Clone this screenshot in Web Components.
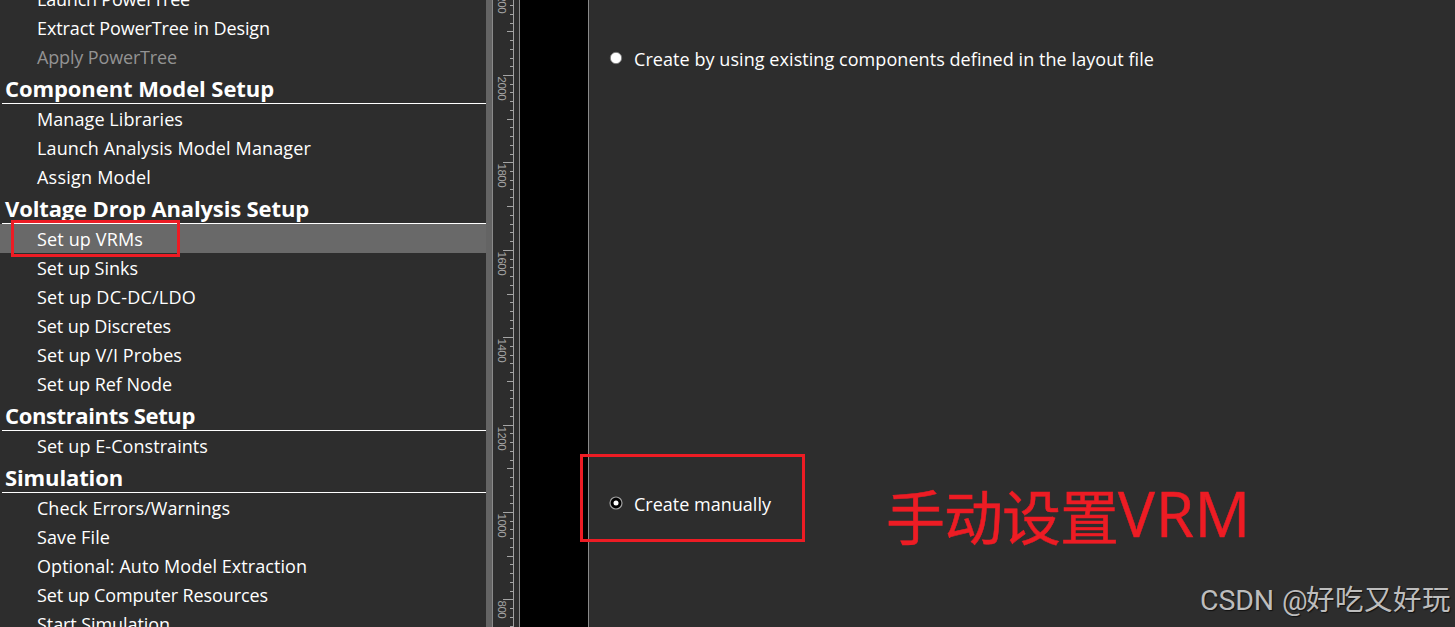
<!DOCTYPE html>
<html lang="en">
<head>
<meta charset="utf-8">
<title>Voltage Drop Analysis Setup</title>
<style>
  html, body {
    margin: 0;
    height: 100%;
    overflow: hidden;
    background: #2d2d2d;
  }
</style>
</head>
<body>
<power-app></power-app>

<script>
// Text that is spaced out to fill the given width
class FitText extends HTMLElement {
  constructor() {
    super();
    this.attachShadow({ mode: "open" });
    this.shadowRoot.innerHTML = `
      <style>
        :host { display: inline-block; white-space: nowrap; }
      </style>
      <span><slot></slot></span>
    `;
  }

  connectedCallback() {
    const target = Number(this.getAttribute("width"));
    const span = this.shadowRoot.querySelector("span");
    const natural = span.getBoundingClientRect().width;
    if (!target || !natural) return;
    const spacing = (target - natural) / this.textContent.length;
    span.style.letterSpacing = `${spacing}px`;
  }
}
customElements.define("fit-text", FitText);

// Red outline used to point at a part of the window
class MarkBox extends HTMLElement {
  constructor() {
    super();
    this.attachShadow({ mode: "open" });
    this.shadowRoot.innerHTML = `
      <style>
        :host {
          display: block;
          position: absolute;
          box-sizing: border-box;
          border: 3px solid #ed1c24;
          pointer-events: none;
        }
      </style>
    `;
  }
}
customElements.define("mark-box", MarkBox);

class FlowItem extends HTMLElement {
  constructor() {
    super();
    this.attachShadow({ mode: "open" });
    this.shadowRoot.innerHTML = `
      <style>
        :host {
          display: block;
          height: 29px;
          padding-left: 37px;
          box-sizing: border-box;
          font: 18px/30px "Open Sans", "Noto Sans", sans-serif;
          color: #fff;
          cursor: pointer;
        }
        :host([disabled]) { color: #939393; }
        :host([selected]) { background: #696969; }
      </style>
      <fit-text width="${this.getAttribute("width")}">${this.getAttribute("label")}</fit-text>
    `;
  }
}

class FlowSection extends HTMLElement {
  constructor() {
    super();
    this.attachShadow({ mode: "open" });
    this.shadowRoot.innerHTML = `
      <style>
        :host { display: block; }
        header {
          height: 32px;
          margin-left: 2px;
          padding-left: 3px;
          border-bottom: 1px solid #fff;
          font: bold 22px/34px "Open Sans", "Noto Sans", sans-serif;
          color: #fff;
        }
      </style>
      <header><fit-text width="${this.getAttribute("width")}">${this.getAttribute("label")}</fit-text></header>
      <slot></slot>
    `;
  }
}

class WorkflowPanel extends HTMLElement {
  constructor() {
    super();
    this.attachShadow({ mode: "open" });
    this.shadowRoot.innerHTML = `
      <style>
        :host {
          display: block;
          width: 486px;
          flex: none;
          overflow: hidden;
        }
        nav { margin-top: -16px; }
      </style>
      <nav>
        <flow-item label="Launch PowerTree" width="153"></flow-item>
        <flow-item label="Extract PowerTree in Design" width="233"></flow-item>
        <flow-item label="Apply PowerTree" width="140" disabled></flow-item>
        <flow-section label="Component Model Setup" width="269">
          <flow-item label="Manage Libraries" width="146"></flow-item>
          <flow-item label="Launch Analysis Model Manager" width="274"></flow-item>
          <flow-item label="Assign Model" width="114"></flow-item>
        </flow-section>
        <flow-section label="Voltage Drop Analysis Setup" width="304">
          <flow-item label="Set up VRMs" width="106" selected></flow-item>
          <flow-item label="Set up Sinks" width="101"></flow-item>
          <flow-item label="Set up DC-DC/LDO" width="159"></flow-item>
          <flow-item label="Set up Discretes" width="134"></flow-item>
          <flow-item label="Set up V/I Probes" width="145"></flow-item>
          <flow-item label="Set up Ref Node" width="135"></flow-item>
        </flow-section>
        <flow-section label="Constraints Setup" width="190">
          <flow-item label="Set up E-Constraints" width="171"></flow-item>
        </flow-section>
        <flow-section label="Simulation" width="118">
          <flow-item label="Check Errors/Warnings" width="193"></flow-item>
          <flow-item label="Save File" width="73"></flow-item>
          <flow-item label="Optional: Auto Model Extraction" width="270"></flow-item>
          <flow-item label="Set up Computer Resources" width="231"></flow-item>
          <flow-item label="Start Simulation" width="133"></flow-item>
        </flow-section>
      </nav>
    `;
  }
}

// Vertical ruler of the layout canvas, a label every 200 units
class LayoutRuler extends HTMLElement {
  constructor() {
    super();
    this.attachShadow({ mode: "open" });
    const step = 8.74;
    let marks = "";
    for (let i = -10; i < 66; i++) {
      const y = Math.floor(75.5 + i * step);
      const len = i % 10 === 0 ? 10 : i % 5 === 0 ? 6 : 3;
      marks += `<rect x="${20 - len}" y="${y}" width="${len}" height="1"/>`;
      if (i % 10 === 0) {
        const value = 2000 - i * 20;
        const size = String(value).length * 6;
        marks += `<text transform="translate(5 ${y + 1.6}) rotate(90)" textLength="${size}">${value}</text>`;
      }
    }
    this.shadowRoot.innerHTML = `
      <style>
        :host {
          display: block;
          flex: none;
          width: 20px;
          border-left: 1px solid #8a8a8a;
          border-right: 1px solid #a0a0a0;
        }
        svg { display: block; fill: #a5a5a5; }
        text { font: 11.5px "Liberation Sans", sans-serif; }
      </style>
      <svg width="20" height="627" shape-rendering="crispEdges">${marks}</svg>
    `;
  }
}
customElements.define("layout-ruler", LayoutRuler);

class RadioOption extends HTMLElement {
  constructor() {
    super();
    this.attachShadow({ mode: "open" });
    const dot = this.hasAttribute("checked")
      ? `<circle cx="7" cy="7" r="6" fill="#000" stroke="#a0a0a0" stroke-width="1.2"/><circle cx="7" cy="7" r="2.5" fill="#fff"/>`
      : `<circle cx="7" cy="7" r="5.7" fill="#fff" stroke="#777" stroke-width=".9"/>`;
    this.shadowRoot.innerHTML = `
      <style>
        :host {
          display: flex;
          align-items: flex-start;
          gap: 11px;
          height: 30px;
          font: 18px/30px "Open Sans", "Noto Sans", sans-serif;
          color: #fff;
        }
        svg { margin-top: 7px; flex: none; }
      </style>
      <svg width="14" height="14">${dot}</svg>
      <fit-text width="${this.getAttribute("width")}">${this.getAttribute("label")}</fit-text>
    `;
  }
}

class VrmPage extends HTMLElement {
  constructor() {
    super();
    this.attachShadow({ mode: "open" });
    this.shadowRoot.innerHTML = `
      <style>
        :host {
          display: flex;
          flex-direction: column;
          flex: 1;
          gap: 415px;
          padding: 44px 0 0 20px;
          border-left: 1px solid #8a8a8a;
        }
      </style>
      <radio-option label="Create by using existing components defined in the layout file" width="520"></radio-option>
      <radio-option label="Create manually" width="137" checked></radio-option>
    `;
  }
}

class PowerApp extends HTMLElement {
  constructor() {
    super();
    this.attachShadow({ mode: "open" });
    this.shadowRoot.innerHTML = `
      <style>
        :host {
          display: flex;
          position: relative;
          width: 1455px;
          height: 627px;
          overflow: hidden;
          background: #2d2d2d;
        }
        .splitter { flex: none; width: 6px; background: #646464; }
        .canvas {
          flex: none;
          width: 68px;
          margin-left: 5px;
          border-left: 1px solid #8a8a8a;
          background: #000;
        }
        .vrms { left: 11px; top: 220px; width: 169px; height: 37px; }
        .manual { left: 580px; top: 454px; width: 225px; height: 88px; }
        .note, .watermark { position: absolute; display: flex; align-items: flex-start; }
        .note {
          left: 886px;
          top: 471px;
          font: 59px/87px "Noto Sans CJK SC", sans-serif;
          color: #ed1c24;
          -webkit-text-stroke: .5px #ed1c24;
        }
        .latin { font: 62px/85px "Open Sans", sans-serif; }
        .watermark {
          left: 1200px;
          top: 581px;
          font: 28.5px/40px Roboto, "Noto Sans CJK SC", sans-serif;
          color: #bdbdbd;
          text-shadow: 1px 1px 1px #111;
          align-items: baseline;
        }
        .at { margin-left: 8px; }
      </style>
      <workflow-panel></workflow-panel>
      <div class="splitter"></div>
      <layout-ruler></layout-ruler>
      <div class="canvas"></div>
      <vrm-page></vrm-page>
      <mark-box class="vrms"></mark-box>
      <mark-box class="manual"></mark-box>
      <div class="note"><fit-text width="232">手动设置</fit-text><fit-text class="latin" width="133">VRM</fit-text></div>
      <div class="watermark"><fit-text width="74">CSDN</fit-text><fit-text class="at" width="24">@</fit-text><fit-text width="145">好吃又好玩</fit-text></div>
    `;
  }
}

customElements.define("flow-item", FlowItem);
customElements.define("flow-section", FlowSection);
customElements.define("workflow-panel", WorkflowPanel);
customElements.define("radio-option", RadioOption);
customElements.define("vrm-page", VrmPage);
customElements.define("power-app", PowerApp);
</script>
</body>
</html>
